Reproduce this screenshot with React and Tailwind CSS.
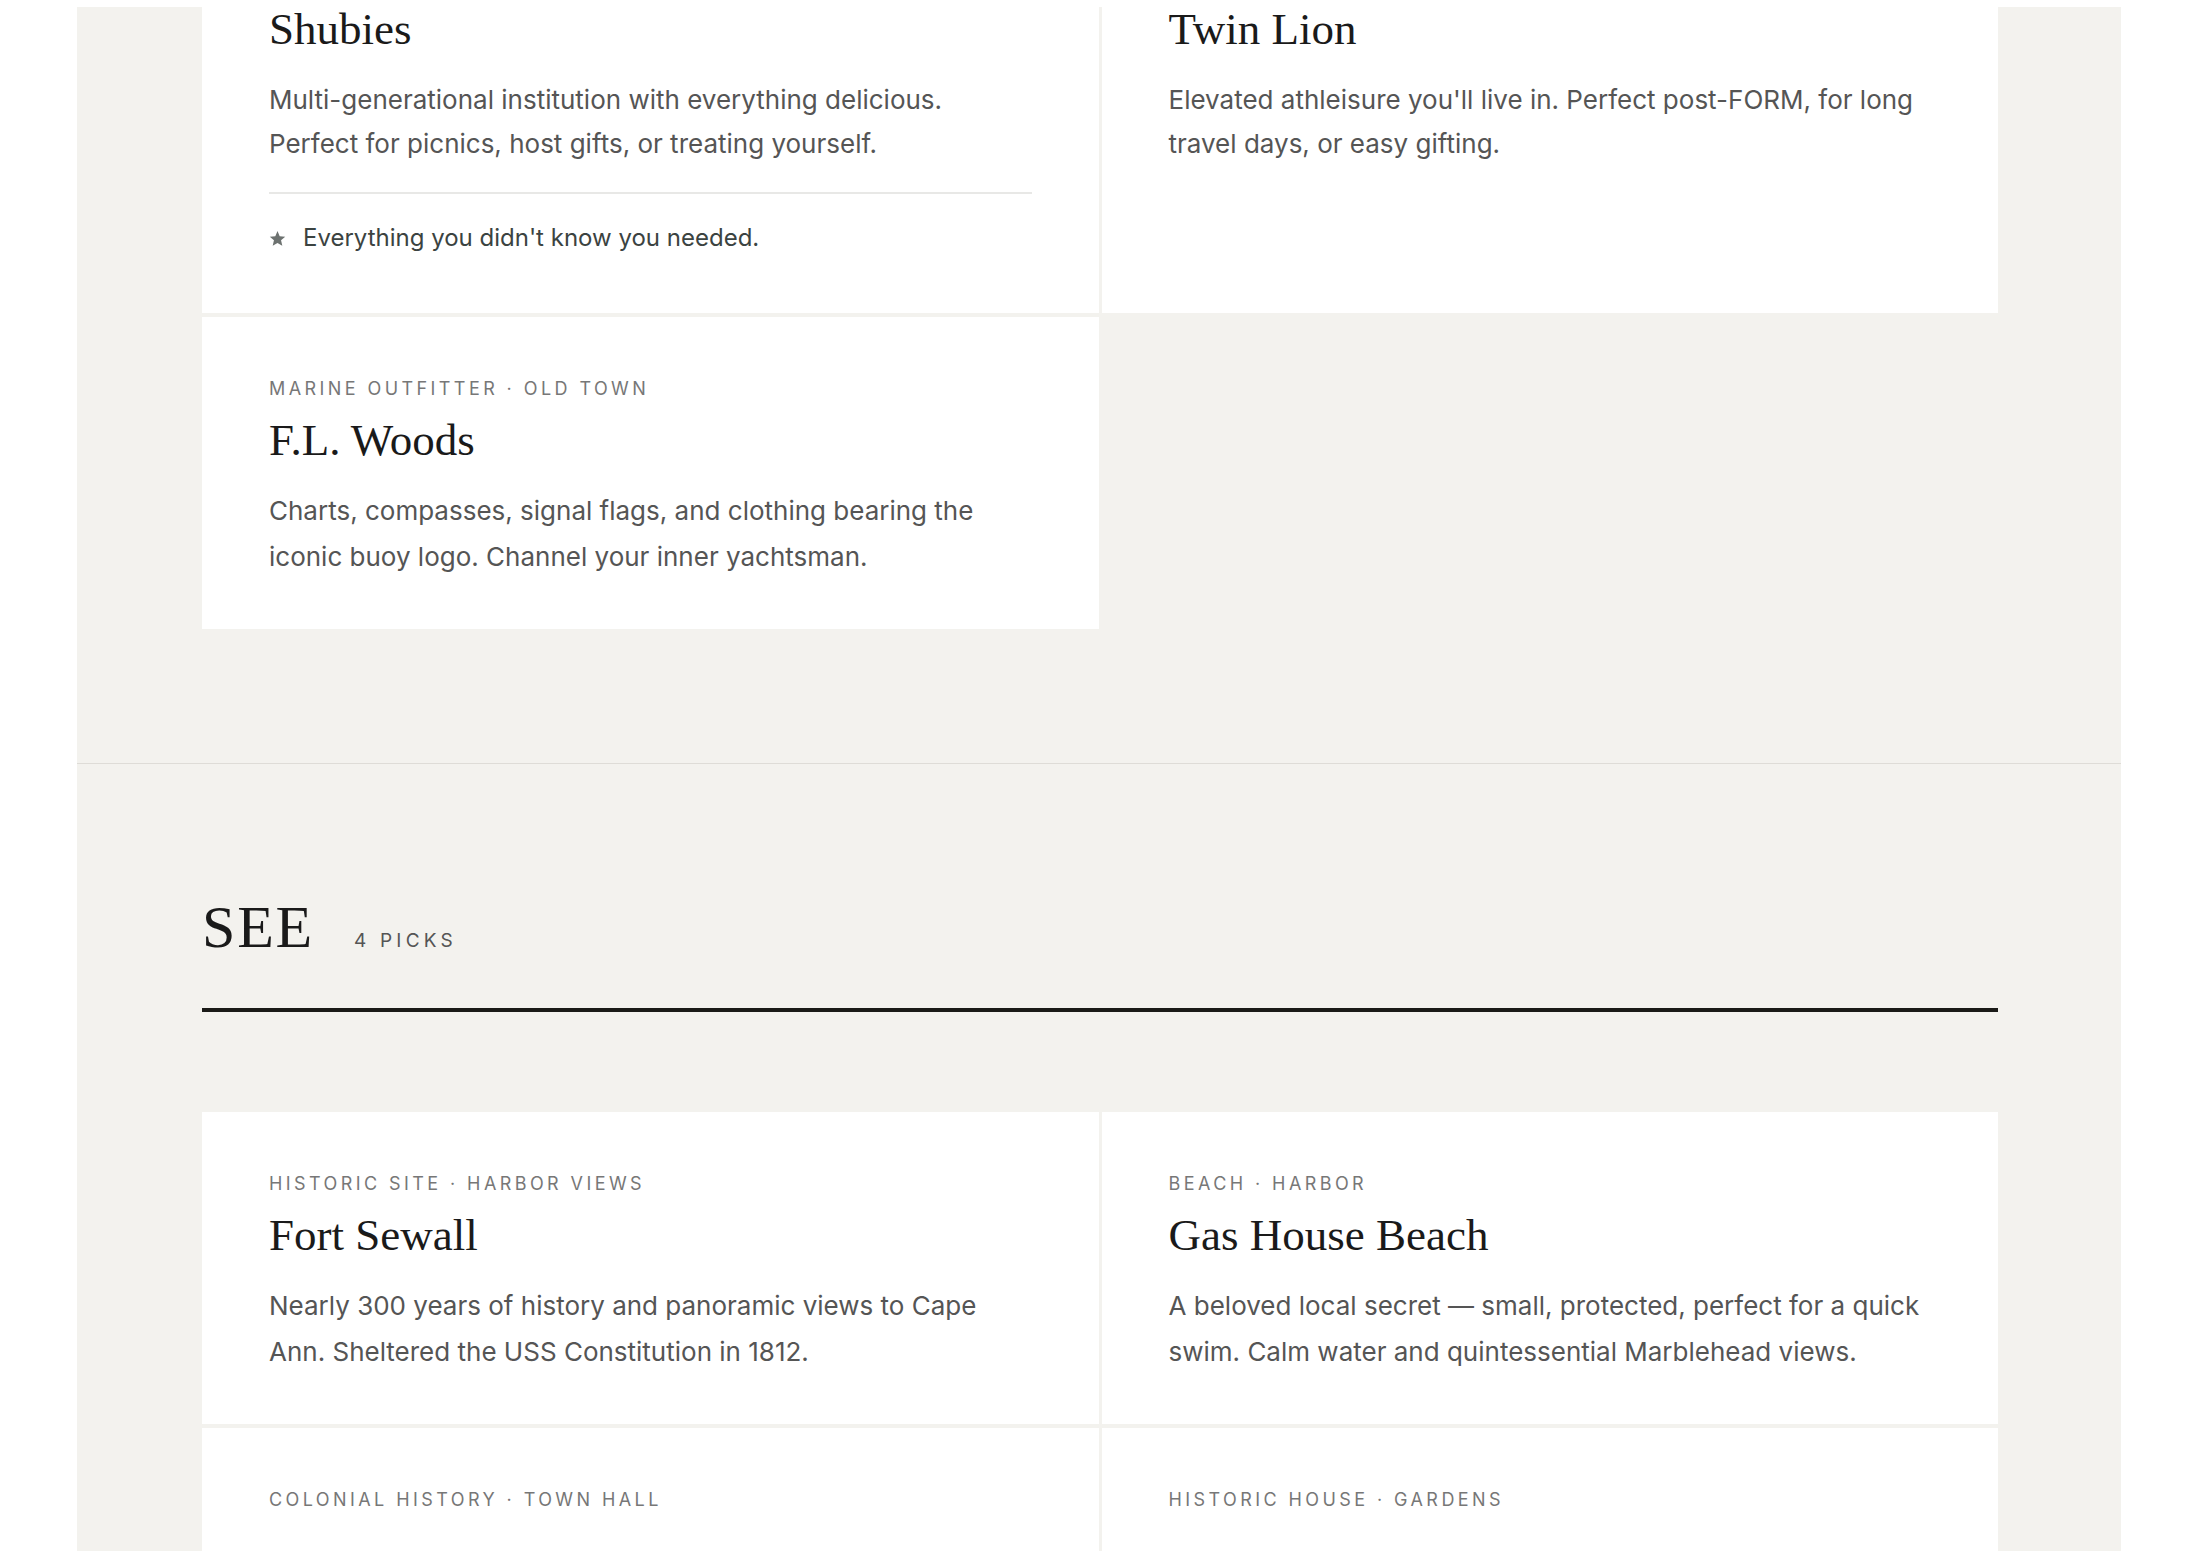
import React from 'react';

const shopPicks = [
  {
    name: 'Shubies',
    blurb: 'Multi-generational institution with everything delicious. Perfect for picnics, host gifts, or treating yourself.',
    note: "Everything you didn't know you needed.",
  },
  {
    name: 'Twin Lion',
    blurb: "Elevated athleisure you'll live in. Perfect post-FORM, for long travel days, or easy gifting.",
  },
  {
    tag: 'Marine Outfitter · Old Town',
    name: 'F.L. Woods',
    blurb: 'Charts, compasses, signal flags, and clothing bearing the iconic buoy logo. Channel your inner yachtsman.',
  },
];

// last two are still below the fold, only their tags show
const seePicks = [
  {
    tag: 'Historic Site · Harbor Views',
    name: 'Fort Sewall',
    blurb: 'Nearly 300 years of history and panoramic views to Cape Ann. Sheltered the USS Constitution in 1812.',
  },
  {
    tag: 'Beach · Harbor',
    name: 'Gas House Beach',
    blurb: 'A beloved local secret — small, protected, perfect for a quick swim. Calm water and quintessential Marblehead views.',
  },
  { tag: 'Colonial History · Town Hall' },
  { tag: 'Historic House · Gardens' },
];

const Star = () => (
  <svg viewBox="0 0 24 24" className="h-[17px] w-[17px] shrink-0 fill-[#6d7270]">
    <path d="M12 1.5l3.1 7.2 7.8.7-5.9 5.2 1.8 7.7L12 18.3l-6.8 4 1.8-7.7L1.1 9.4l7.8-.7z" />
  </svg>
);

const PickCard = ({ pick, clipped }) => {
  return (
    <div className={`bg-white px-[67px] ${clipped ? 'pt-0 pb-[57px]' : 'pt-[58px] pb-[49px]'}`}>
      {pick.tag && (
        <p className="text-[18px] leading-[1.5] tracking-[0.19em] uppercase text-[#777777]">{pick.tag}</p>
      )}
      {pick.name && (
        <h3
          className={`font-['Liberation_Serif',serif] text-[45px] text-[#1a1a1a] ${
            clipped ? 'leading-none' : 'mt-[11px] leading-[1.2]'
          }`}
        >
          {pick.name}
        </h3>
      )}
      {pick.blurb && (
        <p
          className={`text-[26px] text-[#555555] ${
            clipped ? 'mt-[26px] leading-[44px]' : 'mt-[21px] leading-[46px]'
          }`}
        >
          {pick.blurb}
        </p>
      )}

      {/* Insider note */}
      {pick.note && (
        <>
          <div className="mt-[26px] h-[2px] bg-[#e8e8e6]" />
          <div className="mt-[26px] flex items-center gap-[17px]">
            <Star />
            <span className="text-[24px] leading-[36px] text-[#3b4341]">{pick.note}</span>
          </div>
        </>
      )}
    </div>
  );
};

const App = () => {
  return (
    <div className="h-[1560px] overflow-hidden bg-white pl-[77px] pr-[79px] pt-[7px] pb-[9px] font-['Inter',sans-serif]">
      <div className="flex h-full flex-col bg-[#f3f2ee]">
        {/* Shop section (scrolled) */}
        <section className="shrink-0 pl-[125px] pr-[123px] pb-[134px]">
          <div className="grid grid-cols-2 gap-x-[3px] gap-y-[4px]">
            {shopPicks.map((pick) => (
              <PickCard key={pick.name} pick={pick} clipped={!pick.tag} />
            ))}
          </div>
        </section>

        {/* See section */}
        <section className="min-h-0 flex-1 overflow-hidden border-t border-[#dedcd7] pl-[125px] pr-[123px] pt-[133px]">
          <div className="flex items-baseline gap-[40px] border-b-4 border-[#1a1a17] pb-[51px]">
            <h2 className="font-['Liberation_Serif',serif] text-[60px] leading-none tracking-[0.03em] text-[#1a1a1a]">
              SEE
            </h2>
            <span className="text-[19px] leading-[1.5] tracking-[0.22em] text-[#555555]">4 PICKS</span>
          </div>

          <div className="mt-[100px] grid grid-cols-2 gap-x-[3px] gap-y-[4px]">
            {seePicks.map((pick) => (
              <PickCard key={pick.tag} pick={pick} />
            ))}
          </div>
        </section>
      </div>
    </div>
  );
};

export default App;
